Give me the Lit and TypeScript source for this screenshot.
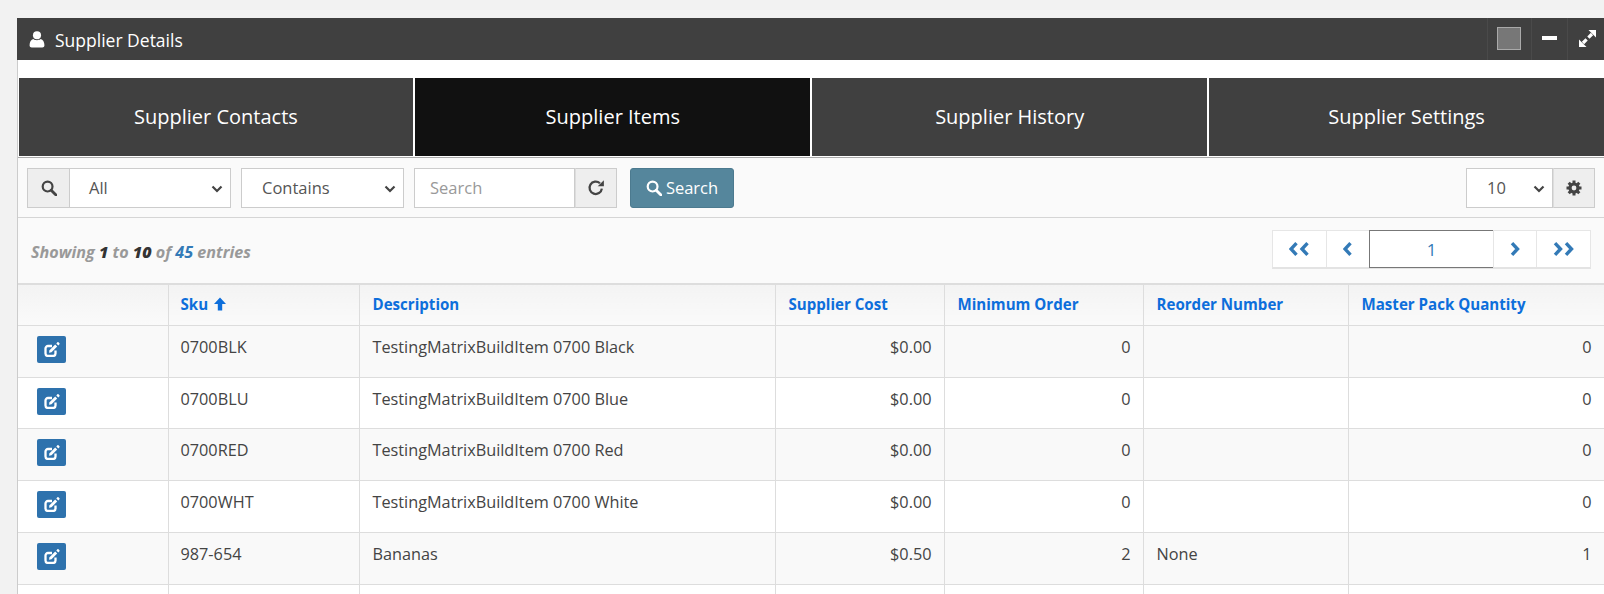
import { LitElement, html, css, svg } from "lit";
import { customElement } from "lit/decorators.js";

const chevDown = html`<svg class="caret" viewBox="0 0 12 8" width="12" height="8"><path d="M1.5 1.5 6 6l4.5-4.5" fill="none" stroke="#444" stroke-width="2.2"/></svg>`;
const searchPath = svg`<circle cx="6.6" cy="6.6" r="4.9" fill="none" stroke="currentColor" stroke-width="2.2"/><path d="M10.2 10.2 15 15" fill="none" stroke="currentColor" stroke-width="2.8" stroke-linecap="round"/>`;
const chevL = (x: number) => svg`<path d="M${x + 7.500} 1.2 ${x + 2} 7l5.500 5.800" fill="none" stroke="#337ab7" stroke-width="3.400"/>`;
const chevR = (x: number) => svg`<path d="M${x + 1} 1.2 ${x + 6.500} 7 ${x + 1} 12.800" fill="none" stroke="#337ab7" stroke-width="3.400"/>`;
const edit = html`<svg viewBox="0 0 16 15" width="16" height="15"><path d="M8 4H4A2.500 2.500 0 0 0 1.500 6.500V11.500A2.500 2.500 0 0 0 4 14h5A2.500 2.500 0 0 0 11.500 11.500V8.500" fill="none" stroke="#fff" stroke-width="2.300"/><path d="M5.500 8.200 11.200 2.500l2 2-5.700 5.700-2.500.5z" fill="#fff"/><path d="M12.300 1.400 13.400.300a.8.800 0 0 1 1.100 0l.9.900a.8.800 0 0 1 0 1.100l-1.100 1.100z" fill="#fff"/></svg>`;

const cog = html`<svg viewBox="0 0 16 16" width="16" height="16"><g fill="#444"><circle cx="8" cy="8" r="5.600"/>${[0, 45, 90, 135, 180, 225, 270, 315].map(a => svg`<rect x="6.500" y="0.500" width="3" height="3.400" transform="rotate(${a} 8 8)"/>`)}</g><circle cx="8" cy="8" r="2.400" fill="#eee"/></svg>`;

const rows = [
  ["0700BLK", "TestingMatrixBuildItem 0700 Black", "$0.00", "0", "", "0"],
  ["0700BLU", "TestingMatrixBuildItem 0700 Blue", "$0.00", "0", "", "0"],
  ["0700RED", "TestingMatrixBuildItem 0700 Red", "$0.00", "0", "", "0"],
  ["0700WHT", "TestingMatrixBuildItem 0700 White", "$0.00", "0", "", "0"],
  ["987-654", "Bananas", "$0.50", "2", "None", "1"],
  ["", "", "", "", "", ""],
];

@customElement("app-root")
export class AppRoot extends LitElement {
  static styles = css`
    :host { display: block; height: 594px; overflow: hidden; background: #f2f2f2; font-family: "Open Sans", sans-serif; font-size: 14px; color: #444; }
    * { box-sizing: border-box; }
    .page { padding: 18px 0 0 17px; width: 1604px; }
    .panel { background: #fff; border-left: 1px solid #ccc; height: 600px; }
    .head { height: 42px; margin-left: -1px; background: #404040; color: #fff; display: flex; align-items: center; padding-left: 12px; font-size: 17.500px; }
    .head .title { margin-left: 10px; flex: 1; padding-top: 1px; }
    .tool { height: 42px; display: flex; align-items: center; justify-content: center; border-left: 1px solid #4a4a4a; }
    .t1 { width: 44px; padding-right: 2px; } .t2 { width: 36px; } .t3 { width: 37px; padding: 0 0 1px 2px; }
    .swatch { width: 24px; height: 23px; background: #777; border: 1px solid #aaa; margin-top: -2px; }
    .minus { width: 15px; height: 4px; background: #fff; margin-top: -2px; }
    .tabs { display: flex; margin-top: 18px; padding-left: .5px; gap: 2px; border-bottom: 1px solid #fff; }
    .tab { flex: 1; height: 78px; background: #404040; color: #fff; font-size: 20px; display: flex; align-items: center; justify-content: center; padding-bottom: 2px; }
    .tab.on { background: #111; }
    .toolbar { height: 61px; background: #fafafa; border-top: 1px solid #aaa; border-bottom: 1px solid #d5d5d5; display: flex; align-items: center; padding: 1px 9px 0; gap: 10px; }
    .group { display: flex; height: 40px; }
    .addon { width: 42px; background: #eee; border: 1px solid #ccc; display: flex; align-items: center; justify-content: center; color: #444; }
    .addon.l { border-right: 0; }
    .addon.r { border-left: 1px solid #ddd; }
    .field { background: #fff; border: 1px solid #ccc; display: flex; align-items: center; font-size: 16.500px; color: #555; position: relative; padding-bottom: 2px; }
    .field .caret { position: absolute; right: 7px; top: 16px; }
    .all { width: 162px; padding-left: 19px; }
    .contains { width: 163px; padding-left: 20px; }
    .input { width: 161px; padding-left: 15px; color: #999; }
    .num { width: 87px; padding-left: 20px; }
    .btn { margin-left: 3px; width: 104px; height: 40px; background: #55869c; border: 1px solid #4c7a8f; border-radius: 3px; color: #fff; font-size: 16.500px; display: flex; align-items: center; justify-content: center; gap: 4px; padding-bottom: 1px; }
    .spacer { flex: 1; }
    .info { height: 65px; background: #fafafa; display: flex; align-items: center; justify-content: space-between; padding: 0 13px 2px; }
    .count { font-size: 16.150px; font-style: italic; font-weight: 700; color: #999; margin-top: 4px; }
    .count b { color: #333; } .count i { color: #337ab7; }
    .pager { display: flex; height: 39px; background: #fff; border: 1px solid #e6e6e6; border-bottom: 2px solid #e3e3e3; }
    .pager div { display: flex; align-items: center; justify-content: center; border-left: 1px solid #e6e6e6; }
    .pager div:first-child { border-left: 0; }
    .p1 { width: 53px; } .p2 { width: 43px; } .p4 { width: 43px; } .p5 { width: 54px; }
    .pager .p3 { width: 124px; margin: -1px 0 -1px; border: 1px solid #777; border-right: 0; color: #337ab7; font-size: 17px; }
    table { border-collapse: collapse; table-layout: fixed; width: 1586px; font-size: 16.250px; }
    th, td { border: 1px solid #ddd; padding: 11px 12px 0 13px; vertical-align: top; text-align: left; font-weight: 400; line-height: 20px; }
    th { height: 41.300px; color: #0d6edb; font-weight: 700; font-size: 15.100px; background: linear-gradient(#f3f3f3, #fafafa); padding-top: 9px; border-top: 2px solid #ddd; }
    td { height: 51.800px; }
    tr:first-child th { border-left: 0; }
    th:nth-child(2), td:nth-child(2) { padding-left: 12px; }
    td:first-child { border-left: 0; padding: 10px 0 0 19px; }
    tbody tr:nth-child(odd) td { background: #f9f9f9; }
    tbody tr:nth-child(6) td { background: #fff; }
    .right { text-align: right; }
    .edit { width: 29px; height: 27px; background: #2e72ad; border-radius: 2px; display: flex; align-items: center; justify-content: center; }
    .sort { margin-left: 6px; vertical-align: -1px; }
  `;

  render() {
    return html`<div class="page"><div class="panel">
      <div class="head">
        <svg viewBox="0 0 14 16" width="16" height="17"><circle cx="7" cy="4" r="3.800" fill="#fff"/><path d="M0 13.500C0 10 1.500 8 3.500 7.500 5 9 9 9 10.500 7.500 12.500 8 14 10 14 13.500 14 15 13 15.500 12 15.500H2C1 15.500 0 15 0 13.500z" fill="#fff"/></svg>
        <span class="title">Supplier Details</span>
        <div class="tool t1"><div class="swatch"></div></div>
        <div class="tool t2"><div class="minus"></div></div>
        <div class="tool t3">
          <svg viewBox="0 0 17 17" width="17" height="17"><g fill="#fff"><path d="M9.500 0H17v7.500z"/><path d="M7.500 17H0V9.500z"/></g><path d="M13 4 9.400 7.600M4 13l3.600-3.600" stroke="#fff" stroke-width="3.200" fill="none"/></svg>
        </div>
      </div>
      <div class="tabs">
        <div class="tab">Supplier Contacts</div>
        <div class="tab on">Supplier Items</div>
        <div class="tab">Supplier History</div>
        <div class="tab">Supplier Settings</div>
      </div>
      <div class="toolbar">
        <div class="group">
          <div class="addon l"><svg viewBox="0 0 16 16" width="16" height="16">${searchPath}</svg></div>
          <div class="field all">All${chevDown}</div>
        </div>
        <div class="group"><div class="field contains">Contains${chevDown}</div></div>
        <div class="group">
          <div class="field input">Search</div>
          <div class="addon r"><svg viewBox="0 0 16 16" width="18" height="18"><path d="M13.200 8.500A5.500 5.500 0 1 1 11.500 3.800" fill="none" stroke="#444" stroke-width="2"/><path d="M15 1v5.500H9.500z" fill="#444"/></svg></div>
        </div>
        <div class="btn"><svg viewBox="0 0 16 16" width="16" height="16">${searchPath}</svg>Search</div>
        <div class="spacer"></div>
        <div class="group">
          <div class="field num">10${chevDown}</div>
          <div class="addon r">${cog}</div>
        </div>
      </div>
      <div class="info">
        <div class="count">Showing <b>1</b> to <b>10</b> of <i>45</i> entries</div>
        <div class="pager">
          <div class="p1"><svg viewBox="0 0 22 14" width="22" height="14">${chevL(0)}${chevL(11)}</svg></div>
          <div class="p2"><svg viewBox="0 0 10 14" width="10" height="14">${chevL(0)}</svg></div>
          <div class="p3">1</div>
          <div class="p4"><svg viewBox="0 0 10 14" width="10" height="14">${chevR(1)}</svg></div>
          <div class="p5"><svg viewBox="0 0 22 14" width="22" height="14">${chevR(1)}${chevR(12)}</svg></div>
        </div>
      </div>
      <table>
        <colgroup><col style="width:150px"/><col style="width:191px"/><col style="width:416px"/><col style="width:169px"/><col style="width:199px"/><col style="width:205px"/><col style="width:256px"/></colgroup>
        <thead><tr>
          <th></th>
          <th>Sku<svg class="sort" viewBox="0 0 12 13" width="12" height="14"><path d="M6 0l6 6.500H8.200V13H3.800V6.500H0z" fill="#0d6edb"/></svg></th>
          <th>Description</th><th>Supplier Cost</th><th>Minimum Order</th><th>Reorder Number</th><th>Master Pack Quantity</th>
        </tr></thead>
        <tbody>
          ${rows.map(r => html`<tr>
            <td>${r[0] ? html`<div class="edit">${edit}</div>` : ""}</td>
            <td>${r[0]}</td><td>${r[1]}</td>
            <td class="right">${r[2]}</td><td class="right">${r[3]}</td>
            <td>${r[4]}</td><td class="right">${r[5]}</td>
          </tr>`)}
        </tbody>
      </table>
    </div></div>`;
  }
}
